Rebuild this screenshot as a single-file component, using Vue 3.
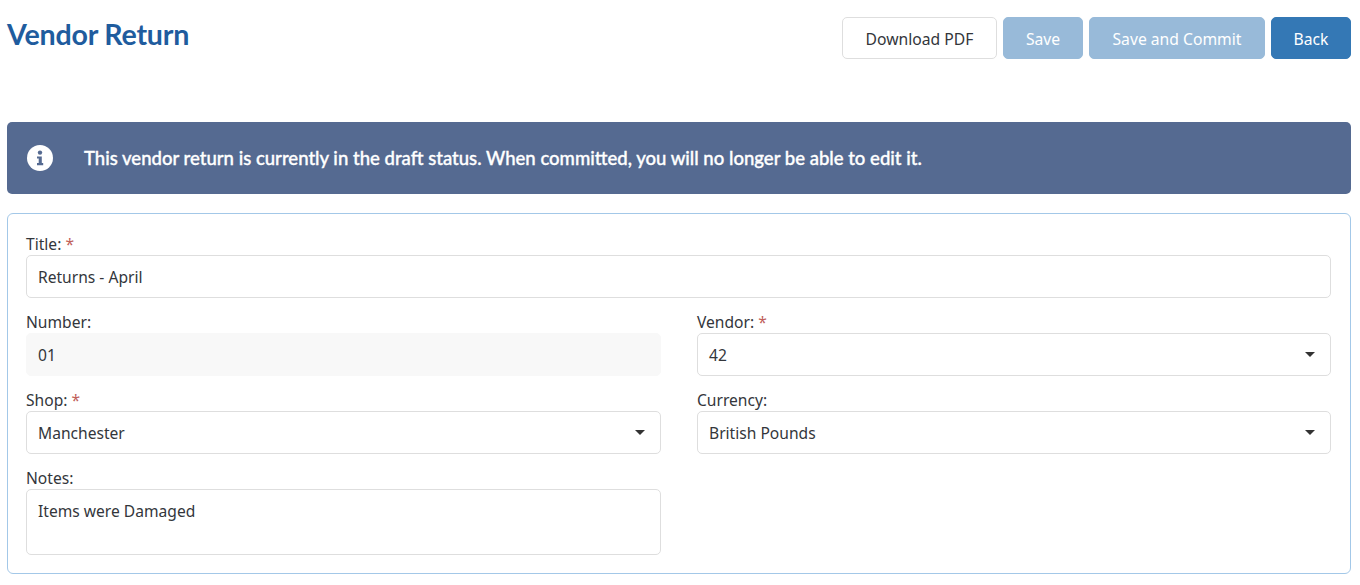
<script setup>
const btns = [
  { t: 'Download PDF', c: 'outline', w: 155 },
  { t: 'Save', c: 'primary off', w: 80 },
  { t: 'Save and Commit', c: 'primary off', w: 176 },
  { t: 'Back', c: 'primary', w: 80 }
]
</script>

<template>
  <div class="page">
    <header class="head">
      <h1 class="title">Vendor Return</h1>
      <div class="actions">
        <button v-for="b in btns" :key="b.t" :class="['btn', b.c]" :style="{ width: b.w + 'px' }">{{ b.t }}</button>
      </div>
    </header>
    <div class="alert">
      <svg class="info" width="26" height="26" viewBox="0 0 26 26">
        <circle cx="13" cy="13" r="13" fill="#fff" />
        <circle cx="13" cy="7.6" r="2.2" fill="#556a91" />
        <path d="M10 11.4h4.8v6.6H16.2v2.2H10V18h1.7v-4.4H10z" fill="#556a91" />
      </svg>
      <span>This vendor return is currently in the draft status. When committed, you will no longer be able to edit it.</span>
    </div>
    <section class="card">
      <div class="field">
        <label>Title: <i>*</i></label>
        <div class="input">Returns - April</div>
      </div>
      <div class="grid">
        <div class="field">
          <label>Number:</label>
          <div class="input ro">01</div>
        </div>
        <div class="field">
          <label>Vendor: <i>*</i></label>
          <div class="input sel">42</div>
        </div>
        <div class="field">
          <label>Shop: <i>*</i></label>
          <div class="input sel">Manchester</div>
        </div>
        <div class="field">
          <label>Currency:</label>
          <div class="input sel">British Pounds</div>
        </div>
        <div class="field">
          <label>Notes:</label>
          <div class="input area">Items were Damaged</div>
        </div>
      </div>
    </section>
  </div>
</template>

<style>
body { background: #fff; }
</style>

<style scoped>
.page {
  padding: 0 9px 0 7px;
  height: 585px;
  box-sizing: border-box;
  overflow: hidden;
  font-family: "Noto Sans", sans-serif;
  color: #33363b;
  font-size: 15.6px;
}
.head {
  height: 122px;
  display: flex;
  justify-content: space-between;
  align-items: flex-start;
}
.title {
  margin: 17px 0 0;
  font-family: Lato, "Noto Sans", sans-serif;
  font-size: 28.6px;
  line-height: 34px;
  font-weight: 700;
  letter-spacing: -0.2px;
  color: #1f5c9e;
}
.actions {
  display: flex;
  gap: 6px;
  margin-top: 17px;
}
.btn {
  height: 42px;
  padding: 1px 0 0;
  border-radius: 5px;
  border: 1px solid #dedede;
  background: #fff;
  font: 15.7px "Noto Sans", sans-serif;
  color: #33363b;
}
.primary { background: #3478b5; border-color: #3478b5; color: #fff; }
.off { opacity: 0.5; }
.alert {
  height: 72px;
  background: #556a91;
  border-radius: 5px;
  display: flex;
  align-items: center;
  padding-left: 20px;
  gap: 31px;
  color: #fff;
  font-family: Lato, "Noto Sans", sans-serif;
  font-weight: 500;
  font-size: 18.55px;
  line-height: 20px;
  padding-bottom: 1px;
  box-sizing: border-box;
  -webkit-text-stroke: 0.35px #fff;
}
.card {
  margin-top: 19px;
  height: 361px;
  box-sizing: border-box;
  border: 1px solid #a3c8e8;
  border-radius: 6px;
  padding: 20px 19px 20px 18px;
}
.grid {
  display: grid;
  grid-template-columns: 635px 634px;
  column-gap: 36px;
}
.field label {
  display: block;
  height: 21px;
  line-height: 21px;
}
.field label i { color: #c0605a; font-style: normal; }
.field { margin-bottom: 14px; }
.input {
  height: 43px;
  box-sizing: border-box;
  border: 1px solid #dedede;
  border-radius: 5px;
  padding: 0 11px;
  display: flex;
  align-items: center;
  position: relative;
}
.ro { background: #f8f8f8; border-color: #f8f8f8; }
.sel::after {
  content: "";
  position: absolute;
  right: 15px;
  top: 18px;
  border: 5px solid transparent;
  border-top-color: #333;
  border-bottom: 0;
}
.area { height: 66px; align-items: flex-start; padding-top: 10px; }
</style>
